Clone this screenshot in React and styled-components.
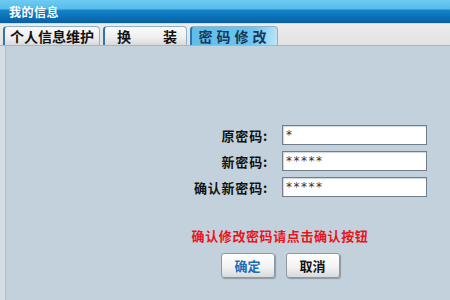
import React from 'react';
import styled, { createGlobalStyle } from 'styled-components';

const Global = createGlobalStyle`
  html, body { margin: 0; padding: 0; }
  body {
    width: 450px; height: 300px; overflow: hidden;
    font-family: "Noto Sans CJK SC", "Liberation Sans", sans-serif;
  }
`;

const Frame = styled.div`
  width: 450px; height: 300px;
  display: flex; flex-direction: column;
  background: #c3d1dc;
`;

const Header = styled.div`
  height: 23px;
  display: flex; align-items: center;
  padding-left: 9px;
  background: linear-gradient(to bottom, #6fcbf2 0%, #55bdec 38%, #1583c8 45%, #0a6db3 80%, #0a5f9e 100%);
  color: #fff;
  font-size: 12px; font-weight: bold;
  letter-spacing: 0.5px;
  border-bottom: 1px solid #b9e3f6;
`;

const TabBar = styled.div`
  height: 21px;
  display: flex; align-items: flex-end; gap: 3px;
  padding: 0 0 0 3px;
  background: linear-gradient(to bottom, #ececec, #e2e2e2);
  border-bottom: 1px solid #a9b6c2;
`;

const Tab = styled.div`
  width: ${p => p.$w}px;
  height: 19px;
  box-sizing: border-box;
  display: flex; align-items: center;
  justify-content: ${p => p.$spread ? 'space-between' : 'center'};
  padding: ${p => p.$spread ? '0 9px 0 12px' : '0'};
  border: 1px solid #8fb2cc;
  border-left: 2px solid #2f73b0;
  border-bottom: none;
  border-radius: 4px 4px 0 0;
  background: ${p => p.$active
    ? 'linear-gradient(100deg, #5fbde9 0%, #6cc6ee 70%, #bfe6f8 100%)'
    : 'linear-gradient(to bottom, #fbfbfb 0%, #eeeeee 60%, #d9d9d9 100%)'};
  color: ${p => p.$active ? '#17385c' : '#111'};
  font-size: 14px; font-weight: bold;
  letter-spacing: ${p => p.$active ? '4px' : '0'};
  white-space: nowrap;
`;

const Body = styled.div`
  flex: 1;
  border-left: 5px solid #d3dee7;
  box-shadow: inset 1px 0 0 #aebccb;
  display: flex; flex-direction: column;
`;

const Form = styled.div`
  margin-top: 79px;
  display: grid;
  grid-template-columns: 263px 145px;
  grid-auto-rows: 20px;
  column-gap: 14px;
  row-gap: 6px;
`;

const Label = styled.div`
  justify-self: end;
  align-self: center;
  font-size: 13px; font-weight: bold;
  letter-spacing: 0.8px;
  color: #111;
`;

const Field = styled.div`
  box-sizing: border-box;
  height: 20px;
  background: #fff;
  border: 1px solid #6f7e8c;
  box-shadow: inset 1px 1px 1px #cfd6dc;
  padding-left: 3px;
  display: flex; align-items: center;
  font-family: "DejaVu Sans", sans-serif;
  font-size: 12px;
  letter-spacing: 1.5px;
  color: #333;
`;

const Footer = styled.div`
  padding-left: 105px;
  width: 340px;
  display: flex; flex-direction: column; align-items: center;
`;

const Notice = styled.div`
  margin-top: 31px;
  font-size: 13px; font-weight: bold;
  letter-spacing: 0.6px;
  line-height: 16px;
  color: #e8141c;
`;

const Buttons = styled.div`
  margin-top: 9px;
  display: flex; gap: 11px;
`;

const Button = styled.div`
  width: 54px; height: 25px;
  box-sizing: border-box;
  display: flex; align-items: center; justify-content: center;
  border: 1px solid #8e98a2;
  border-radius: 3px;
  background: linear-gradient(to bottom, #ffffff 0%, #f3f3f3 55%, #d7d9db 100%);
  box-shadow: 1px 1px 1px #8d99a4;
  font-size: 13px; font-weight: bold;
  color: ${p => p.$primary ? '#1b6db5' : '#111'};
`;

const rows = [
  { label: '原密码:', value: '*' },
  { label: '新密码:', value: '*****' },
  { label: '确认新密码:', value: '*****' },
];

const App = () => (
  <Frame>
    <Global />
    <Header>我的信息</Header>
    <TabBar>
      <Tab $w={97}>个人信息维护</Tab>
      <Tab $w={84} $spread><span>换</span><span>装</span></Tab>
      <Tab $w={88} $active>密码修改</Tab>
    </TabBar>
    <Body>
      <Form>
        {rows.map(r => (
          <React.Fragment key={r.label}>
            <Label>{r.label}</Label>
            <Field>{r.value}</Field>
          </React.Fragment>
        ))}
      </Form>
      <Footer>
        <Notice>确认修改密码请点击确认按钮</Notice>
        <Buttons>
          <Button $primary>确定</Button>
          <Button>取消</Button>
        </Buttons>
      </Footer>
    </Body>
  </Frame>
);

export default App;
